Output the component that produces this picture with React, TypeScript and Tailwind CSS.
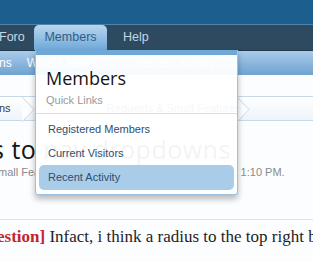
import React from "react";

function Chevron({ left }: { left: number }) {
  return (
    <svg
      className="absolute top-0"
      style={{ left }}
      width="14"
      height="25"
      viewBox="0 0 14 25"
    >
      <path d="M0 0 L12 12.5 L0 25" fill="#fbfdff" stroke="#c6d9e9" strokeWidth="1" />
    </svg>
  );
}

export default function App() {
  return (
    <div
      className="relative w-[313px] h-[262px] overflow-hidden bg-[#fcfdfe]"
      style={{ fontFamily: '"Liberation Sans", Arial, sans-serif' }}
    >
      {/* top header */}
      <div className="h-[24px] bg-[#1c5f8e]" />
      {/* nav bar */}
      <div className="h-[26px] bg-[#2d4a60] border-t border-[#4f83ac] flex items-end text-[12.5px]">
        <div className="w-[35px] h-full flex items-center text-[#c9d8e6] -ml-[1px]">Foro</div>
        <div className="w-[73px] h-full rounded-t-[5px] bg-gradient-to-b from-[#b7d6f0] via-[#93c0e4] to-[#6fa8d7] flex items-center justify-center text-[#365d84]">
          Members
        </div>
        <div className="h-full flex items-center pl-[16px] text-[#c6d6e4]">Help</div>
      </div>
      {/* sub bar */}
      <div className="h-[25px] border-t border-[#21384a] bg-gradient-to-b from-[#a9cbea] to-[#6fa3d1] flex items-center text-[12px] text-white">
        <span className="-ml-[1px]">ns</span>
        <span className="ml-[15px]">What's New?</span>
        <span className="ml-[40px] text-[#eef5fb]">Recent Activity</span>
      </div>
      <div className="h-[21px]" />
      {/* breadcrumb */}
      <div className="relative h-[25px] border-y border-[#c6d9e9] bg-gradient-to-b from-[#ffffff] to-[#eef4fa] text-[11px] text-[#3a3a3a] flex items-center">
        <span className="-ml-[1px]">ns</span>
        <Chevron left={22} />
        <span className="ml-[96px] text-[#2f5a85] underline">Requests &amp; Small Features</span>
        <Chevron left={237} />
      </div>
      {/* title */}
      <div
        className="mt-[13px] -ml-[8px] text-[25px] leading-[30px] text-[#141414] whitespace-nowrap tracking-[0.5px]"
        style={{ fontFamily: '"Open Sans", "Liberation Sans", sans-serif' }}
      >
        s to nav dropdowns
      </div>
      <div className="mt-[1px] text-[11px] leading-[14px] text-[#8a8a8a] whitespace-nowrap -ml-[2px]">
        mall Features' started by Shelley, Jan 14, 2011 at 1:10 PM.
      </div>
      <div className="mt-[40px] border-t border-[#d3e5f1]" />
      <div
        className="mt-[6px] text-[17px] leading-[22px] whitespace-nowrap text-[#1e1e1e] -ml-[3px]"
        style={{ fontFamily: '"Liberation Serif", "Times New Roman", serif' }}
      >
        <span className="font-bold text-[#c0262c]">estion]</span> Infact, i think a radius to the top right border
      </div>

      {/* dropdown */}
      <div className="absolute left-[35px] top-[50px] w-[203px] h-[145px] border border-[#9cc0e0] border-t-0 rounded-b-[3px] bg-[rgba(255,255,255,0.95)] shadow-[0_4px_6px_rgba(0,0,0,0.28)]">
        <div className="h-[5px] bg-[#6fa8d7]" />
        <div className="px-[10px] pt-[12px] border-b border-[#d2e2ef] h-[59px]">
          <div
            className="text-[18px] leading-[22px] text-[#141414]"
            style={{ fontFamily: '"Open Sans", "Liberation Sans", sans-serif' }}
          >
            Members
          </div>
          <div className="text-[11px] leading-[14px] mt-[4px] text-[#9a9a9a]">Quick Links</div>
        </div>
        <div className="px-[3px] pt-[3px] text-[11px] text-[#2d4e6f]">
          <div className="h-[24px] flex items-center pl-[9px]">Registered Members</div>
          <div className="h-[24px] flex items-center pl-[9px]">Current Visitors</div>
          <div className="h-[25px] flex items-center pl-[9px] rounded-[5px] bg-[#a9cde8]">Recent Activity</div>
        </div>
      </div>
    </div>
  );
}
